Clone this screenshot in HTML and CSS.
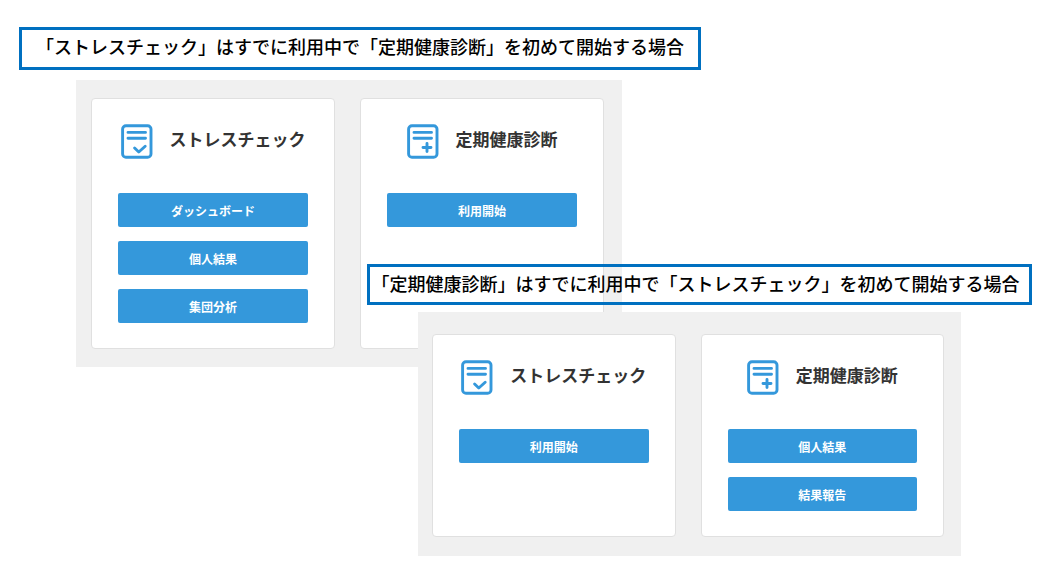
FILE: index.html
```html
<!DOCTYPE html>
<html lang="ja">
<head>
    <meta charset="UTF-8">
    <meta name="viewport" content="width=device-width, initial-scale=1.0">
    <title>利用開始の手順</title>
    <link rel="stylesheet" href="styles.css">
</head>
<body>
    <!-- shared icons -->
    <svg class="icon-defs" aria-hidden="true">
        <symbol id="icon-check" viewBox="0 0 32 36">
            <rect x="1.6" y="1.7" width="28.4" height="31.6" rx="3.4"/>
            <path d="M7 8.4h17.5M7 14.2h17.5M13.6 24l4.2 4 6.4-5.8"/>
        </symbol>
        <symbol id="icon-plus" viewBox="0 0 32 36">
            <rect x="1.6" y="1.7" width="28.4" height="31.6" rx="3.4"/>
            <path d="M7 8.4h17.5M7 14.2h17.5M16 23.5h8M20 19.5v8"/>
        </symbol>
    </svg>

    <main class="guide">
        <section class="case case-stress">
            <h1 class="caption">「ストレスチェック」はすでに利用中で「定期健康診断」を初めて開始する場合</h1>
            <div class="panel">
                <div class="card">
                    <h2><svg class="icon" aria-hidden="true"><use href="#icon-check"/></svg>ストレスチェック</h2>
                    <div class="buttons">
                        <button type="button" class="btn">ダッシュボード</button>
                        <button type="button" class="btn">個人結果</button>
                        <button type="button" class="btn">集団分析</button>
                    </div>
                </div>
                <div class="card">
                    <h2><svg class="icon" aria-hidden="true"><use href="#icon-plus"/></svg>定期健康診断</h2>
                    <div class="buttons">
                        <button type="button" class="btn">利用開始</button>
                    </div>
                </div>
            </div>
        </section>

        <section class="case case-checkup">
            <h1 class="caption">「定期健康診断」はすでに利用中で「ストレスチェック」を初めて開始する場合</h1>
            <div class="panel">
                <div class="card">
                    <h2><svg class="icon" aria-hidden="true"><use href="#icon-check"/></svg>ストレスチェック</h2>
                    <div class="buttons">
                        <button type="button" class="btn">利用開始</button>
                    </div>
                </div>
                <div class="card">
                    <h2><svg class="icon" aria-hidden="true"><use href="#icon-plus"/></svg>定期健康診断</h2>
                    <div class="buttons">
                        <button type="button" class="btn">個人結果</button>
                        <button type="button" class="btn">結果報告</button>
                    </div>
                </div>
            </div>
        </section>
    </main>
</body>
</html>
```
FILE: styles.css
```css
body {
    font-family: "Noto Sans CJK JP", sans-serif;
    background-color: #fff;
    color: #333;
    margin: 0;
}

.icon-defs {
    display: none;
}

/* the two cases share the middle column, so they overlap */
.guide {
    display: grid;
    grid-template-columns: 19fr 348fr 334fr 331fr 22fr;
    padding: 27px 0 14px;
}

.case-stress {
    grid-column: 2 / 4;
}

.case-checkup {
    grid-column: 3 / 5;
    margin-top: -103px;
    z-index: 1;
}

.caption {
    margin: 0;
    padding: 3px 0 8px;
    border: 3px solid #0070c0;
    color: #000;
    font-size: 18px;
    font-weight: 500;
    line-height: 26px;
    text-align: center;
    white-space: nowrap;
}

.case-checkup .caption {
    padding: 3px 8px 6px 0;
}

.panel {
    display: flex;
    gap: 25px;
    margin: 10px 79px 0 57px;
    padding: 18px 18px 18px 15px;
    background-color: #f0f0f0;
}

.case-checkup .panel {
    margin: 7px 71px 0 51px;
    padding: 22px 17px 19px 14px;
}

.card {
    flex: 1;
    padding: 25px 26px;
    background-color: #fff;
    border: 1px solid #e0e0e0;
    border-radius: 4px;
}

.card h2 {
    display: flex;
    justify-content: center;
    align-items: flex-start;
    gap: 17px;
    margin: 0 0 33px;
    font-size: 17px;
    line-height: 30px;
    white-space: nowrap;
}

.icon {
    width: 32px;
    height: 36px;
    fill: none;
    stroke: #3498db;
    stroke-width: 2.9;
    stroke-linecap: round;
    stroke-linejoin: round;
}

.buttons {
    display: flex;
    flex-direction: column;
    gap: 14px;
}

.btn {
    height: 34px;
    padding: 0;
    border: 0;
    border-radius: 2px;
    background-color: #3498db;
    color: #fff;
    font-family: inherit;
    font-size: 12px;
    font-weight: bold;
    cursor: pointer;
}

.btn:hover {
    background-color: #2980b9;
}
```
